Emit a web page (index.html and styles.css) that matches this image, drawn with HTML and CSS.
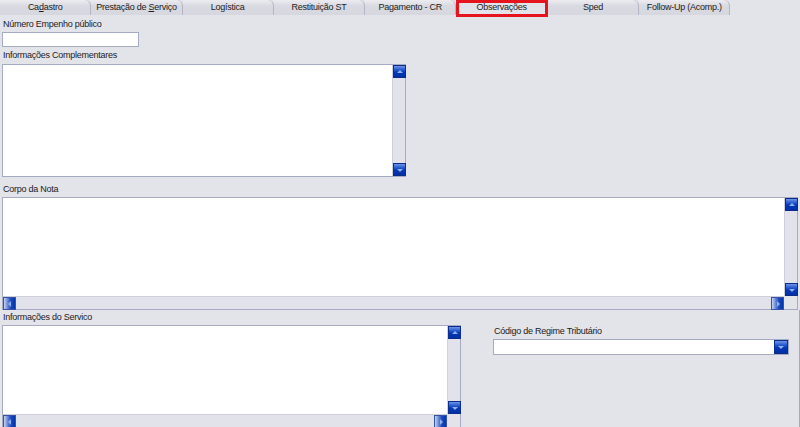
FILE: index.html
```html
<!DOCTYPE html>
<html lang="pt-BR">
    <head>
        <meta charset="UTF-8">
        <title>Observações</title>
        <link rel="stylesheet" href="styles.css">
    </head>
    <body>
        <div class="tabs">
            <div class="tabs__item">Ca<u>d</u>astro</div>
            <div class="tabs__item">Prestação de <u>S</u>erviço</div>
            <div class="tabs__item">Logística</div>
            <div class="tabs__item">Restituição ST</div>
            <div class="tabs__item">Pagamento - CR</div>
            <div class="tabs__item tabs__item--active">Observações</div>
            <div class="tabs__item">Sped</div>
            <div class="tabs__item">Follow-Up (Acomp.)</div>
        </div>

        <div class="page">
            <div class="label label--first">Número Empenho público</div>
            <div class="edit edit--empenho"></div>

            <div class="label label--complement">Informações Complementares</div>
            <div class="memo memo--complement">
                <div class="memo__text"></div>
                <div class="memo__vbar">
                    <span class="btn btn--up"></span>
                    <span class="btn btn--down"></span>
                </div>
            </div>

            <div class="label label--corpo">Corpo da Nota</div>
            <div class="memo memo--corpo">
                <div class="memo__text"></div>
                <div class="memo__vbar">
                    <span class="btn btn--up"></span>
                    <span class="btn btn--down"></span>
                </div>
                <div class="memo__hbar">
                    <span class="btn btn--left"></span>
                    <span class="btn btn--right"></span>
                </div>
                <div class="memo__corner"></div>
            </div>

            <div class="bottom">
                <div class="bottom__left">
                    <div class="label">Informações do Servico</div>
                    <div class="memo memo--servico">
                        <div class="memo__text"></div>
                        <div class="memo__vbar">
                            <span class="btn btn--up"></span>
                            <span class="btn btn--down"></span>
                        </div>
                        <div class="memo__hbar">
                            <span class="btn btn--left"></span>
                            <span class="btn btn--right"></span>
                        </div>
                        <div class="memo__corner"></div>
                    </div>
                </div>
                <div class="bottom__right">
                    <div class="label">Código de Regime Tributário</div>
                    <div class="combo">
                        <div class="combo__text"></div>
                        <span class="btn btn--down"></span>
                    </div>
                </div>
            </div>
        </div>
    </body>
</html>
```

FILE: styles.css
```css
:root{
    --bg: #e3e3ea;
    --border: #a6abc4;
    --btn-size: 13px;
}

html, body{
    margin: 0;
}

body{
    background: var(--bg);
    font-family: "Liberation Sans", Arial, sans-serif;
    font-size: 9px;
    letter-spacing: -0.25px;
    color: #222;
    width: 800px;
    height: 427px;
    overflow: hidden;
}

.tabs{
    display: flex;
    height: 15px;
}

.tabs__item{
    width: 91.3px;
    flex: none;
    box-sizing: border-box;
    text-align: center;
    line-height: 15px;
    background: linear-gradient(#ececf1, #d9d9e1 40%, #d7d7df);
    border-right: 1px solid #b4b4c4;
    border-top-right-radius: 6px;
    white-space: nowrap;
}

.tabs__item--active{
    position: relative;
    background: var(--bg);
}

.tabs__item--active::after{
    content: '';
    position: absolute;
    left: 0;
    top: 0;
    width: 92px;
    height: 17px;
    box-sizing: border-box;
    border: 3px solid #e6141c;
}

.page{
    padding: 0 2px;
}

.label{
    line-height: 13px;
    padding-left: 1px;
    white-space: nowrap;
}

.label--first{
    margin-top: 3px;
}

.label--complement{
    margin-top: 2px;
}

.label--corpo{
    margin-top: 6px;
}

.edit{
    background: #fff;
    border: 1px solid var(--border);
    box-sizing: border-box;
    height: 15px;
    margin-top: 1px;
}

.edit--empenho{
    width: 137px;
}

.memo{
    display: grid;
    grid-template-columns: 1fr var(--btn-size);
    border: 1px solid var(--border);
    box-sizing: border-box;
    margin-top: 2px;
}

.memo--complement{
    width: 404px;
    height: 113px;
}

.memo--corpo{
    width: 796px;
    height: 113px;
    margin-top: 1px;
    grid-template-rows: 1fr var(--btn-size);
}

.memo--servico{
    width: 459px;
    height: 102px;
    margin-top: 1px;
    border-bottom: none;
    grid-template-rows: 1fr var(--btn-size);
}

.memo__text{
    background: #fff;
}

.memo__vbar{
    display: flex;
    flex-direction: column;
    justify-content: space-between;
    background: #e2e2ea;
    border-left: 1px solid #cfcfdb;
}

.memo__hbar{
    display: flex;
    justify-content: space-between;
    background: #e2e2ea;
    border-top: 1px solid #cfcfdb;
}

.memo__corner{
    background: var(--bg);
}

.btn{
    display: block;
    width: var(--btn-size);
    height: var(--btn-size);
    flex: none;
    box-sizing: border-box;
    border: 1px solid #0a2d8c;
    background: linear-gradient(#6f93e4 0, #2458cf 35%, #0538b4 55%, #0330a6 100%);
    position: relative;
}

.btn::after{
    content: '';
    position: absolute;
    left: 3px;
    top: 4px;
    border-left: 3px solid transparent;
    border-right: 3px solid transparent;
}

.btn--up::after{
    border-bottom: 3px solid #8fb0ee;
}

.btn--down::after{
    top: 5px;
    border-top: 3px solid #8fb0ee;
}

.btn--left,
.btn--right{
    background: linear-gradient(to right, #c8d4f0 0, #6f8fd8 30%, #1d4cc2 60%, #0432a8 100%);
    border-color: #3554a8;
}

.btn--left::after,
.btn--right::after{
    left: 5px;
    top: 3px;
    border: none;
    border-top: 3px solid transparent;
    border-bottom: 3px solid transparent;
}

.btn--left::after{
    left: 4px;
    border-right: 3px solid #8fb0ee;
}

.btn--right::after{
    border-left: 3px solid #8fb0ee;
}

.bottom{
    display: grid;
    grid-template-columns: 459px 296px;
    column-gap: 32px;
    border-right: 1px solid #a9a9bb;
    margin-right: -2px;
    height: 118px;
}

.bottom__left .label{
    margin-top: 1px;
}

.bottom__right .label{
    margin-top: 15px;
}

.combo{
    display: flex;
    justify-content: space-between;
    background: #fff;
    border: 1px solid var(--border);
    height: 16px;
    box-sizing: border-box;
    margin-top: 1px;
}

.combo .btn{
    height: 14px;
    width: 14px;
}
```
